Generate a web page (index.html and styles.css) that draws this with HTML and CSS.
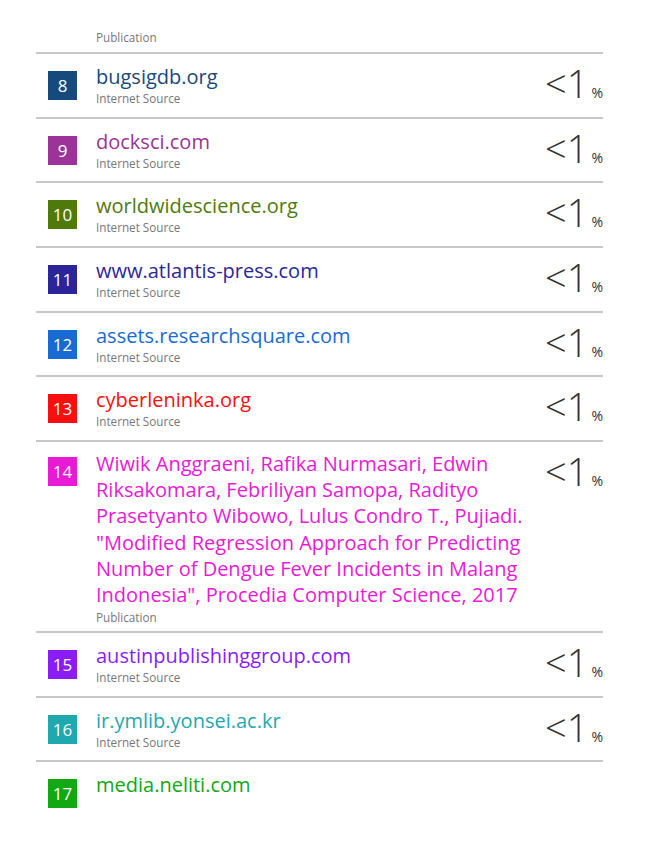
FILE: index.html
```html
<!DOCTYPE html>
<html>
<head>
<meta charset="utf-8">
<link rel="stylesheet" href="styles.css">
</head>
<body>
<div class="report">
  <div class="head"><span class="type">Publication</span></div>

  <div class="row c8">
    <div class="num"><span class="badge">8</span></div>
    <div class="src"><div class="title">bugsigdb.org</div><div class="type">Internet Source</div></div>
    <div class="pct"><span class="lt">&lt;1</span><span class="pc">%</span></div>
  </div>
  <div class="row c9">
    <div class="num"><span class="badge">9</span></div>
    <div class="src"><div class="title">docksci.com</div><div class="type">Internet Source</div></div>
    <div class="pct"><span class="lt">&lt;1</span><span class="pc">%</span></div>
  </div>
  <div class="row c10">
    <div class="num"><span class="badge">10</span></div>
    <div class="src"><div class="title">worldwidescience.org</div><div class="type">Internet Source</div></div>
    <div class="pct"><span class="lt">&lt;1</span><span class="pc">%</span></div>
  </div>
  <div class="row c11">
    <div class="num"><span class="badge">11</span></div>
    <div class="src"><div class="title">www.atlantis-press.com</div><div class="type">Internet Source</div></div>
    <div class="pct"><span class="lt">&lt;1</span><span class="pc">%</span></div>
  </div>
  <div class="row c12">
    <div class="num"><span class="badge">12</span></div>
    <div class="src"><div class="title">assets.researchsquare.com</div><div class="type">Internet Source</div></div>
    <div class="pct"><span class="lt">&lt;1</span><span class="pc">%</span></div>
  </div>
  <div class="row c13">
    <div class="num"><span class="badge">13</span></div>
    <div class="src"><div class="title">cyberleninka.org</div><div class="type">Internet Source</div></div>
    <div class="pct"><span class="lt">&lt;1</span><span class="pc">%</span></div>
  </div>
  <div class="row c14">
    <div class="num"><span class="badge">14</span></div>
    <div class="src"><div class="title">Wiwik Anggraeni, Rafika Nurmasari, Edwin Riksakomara, Febriliyan Samopa, Radityo Prasetyanto Wibowo, Lulus Condro T., Pujiadi. "Modified Regression Approach for Predicting Number of Dengue Fever Incidents in Malang Indonesia", Procedia Computer Science, 2017</div><div class="type">Publication</div></div>
    <div class="pct"><span class="lt">&lt;1</span><span class="pc">%</span></div>
  </div>
  <div class="row c15">
    <div class="num"><span class="badge">15</span></div>
    <div class="src"><div class="title">austinpublishinggroup.com</div><div class="type">Internet Source</div></div>
    <div class="pct"><span class="lt">&lt;1</span><span class="pc">%</span></div>
  </div>
  <div class="row c16">
    <div class="num"><span class="badge">16</span></div>
    <div class="src"><div class="title">ir.ymlib.yonsei.ac.kr</div><div class="type">Internet Source</div></div>
    <div class="pct"><span class="lt">&lt;1</span><span class="pc">%</span></div>
  </div>
  <div class="row c17 last">
    <div class="num"><span class="badge">17</span></div>
    <div class="src"><div class="title">media.neliti.com</div></div>
    <div class="pct"></div>
  </div>
</div>
</body>
</html>
```

FILE: styles.css
```css
html, body {
  margin: 0;
  padding: 0;
  background: #ffffff;
}
body {
  font-family: "Open Sans", "Noto Sans", sans-serif;
  color: #333;
}
.report {
  margin-left: 36px;
  width: 567px;
  padding-top: 30px;
}
.head {
  padding-left: 60px;
  padding-bottom: 8px;
}
.type {
  display: block;
  font-size: 11.7px;
  line-height: 14px;
  color: #777;
}
.src .type {
  margin-top: 2px;
}
.row {
  display: grid;
  grid-template-columns: 60px 1fr 64px;
  border-top: 2px solid #c8c8c8;
  padding: 11px 0 11.67px 0;
}
.num {
  padding-left: 12px;
}
.badge {
  display: flex;
  align-items: center;
  justify-content: center;
  width: 29px;
  height: 29px;
  margin-top: 6px;
  color: #fff;
  font-size: 17px;
  line-height: 1;
}
.title {
  font-size: 20px;
  line-height: 24px;
}
.c14 {
  padding-bottom: 6.8px;
}
.c14 .title {
  line-height: 26.2px;
  margin-top: -2px;
}
.c14 .badge {
  margin-top: 4px;
}
.pct {
  display: flex;
  justify-content: flex-end;
  align-items: baseline;
  margin-top: -1px;
  color: #333;
}
.lt {
  font-size: 38px;
  font-weight: 300;
  line-height: 38px;
}
.pc {
  font-size: 14px;
  margin-left: 3px;
}
.c8 .badge { background: #174a7c; } .c8 .title { color: #174a7c; }
.c9 .badge { background: #9c3399; } .c9 .title { color: #9c3399; }
.c10 .badge { background: #4f7a0a; } .c10 .title { color: #4f7a0a; }
.c11 .badge { background: #2a2699; } .c11 .title { color: #2a2699; }
.c12 .badge { background: #1a6ad4; } .c12 .title { color: #1a6ad4; }
.c13 .badge { background: #f81010; } .c13 .title { color: #f81010; }
.c14 .badge { background: #e81ad4; } .c14 .title { color: #e81ad4; }
.c15 .badge { background: #8a1cf5; } .c15 .title { color: #8a1cf5; }
.c16 .badge { background: #1fa8ae; } .c16 .title { color: #1fa8ae; }
.c17 .badge { background: #11a811; } .c17 .title { color: #11a811; }
.last {
  padding-bottom: 40px;
}
```
